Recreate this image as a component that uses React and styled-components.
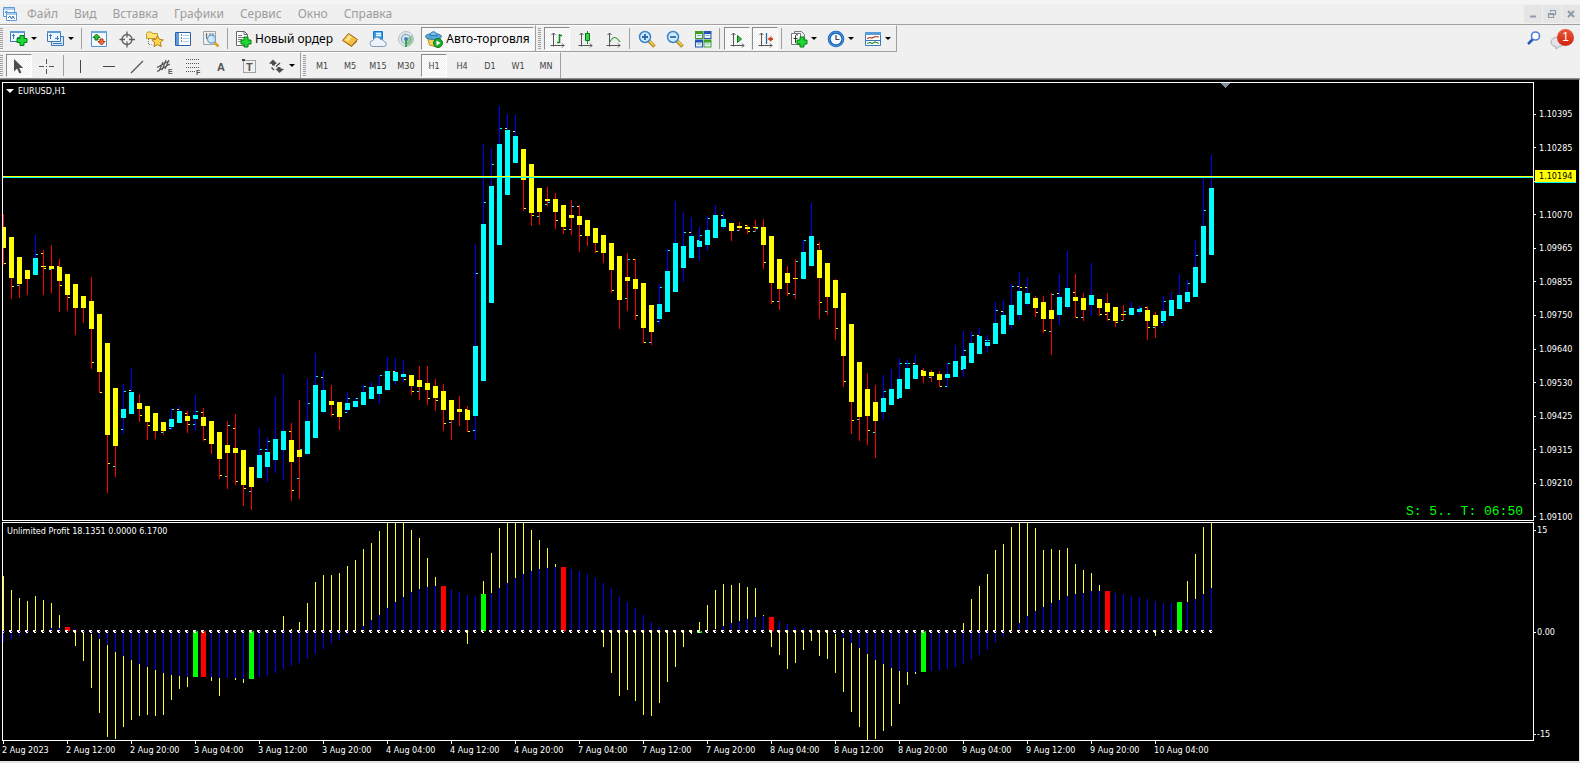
import React from "react";
import styled, { createGlobalStyle, css } from "styled-components";

const GlobalStyle = createGlobalStyle`
  * {
    box-sizing: border-box;
  }

  body {
    margin: 0;
    background: #f0f0f0;
    font-family: "Noto Sans", "Open Sans", sans-serif;
    font-size: 12px;
  }

  ul {
    margin: 0;
    padding: 0;
    list-style: none;
  }
`;

const chartFont = css`
  font-family: "DejaVu Sans Condensed", "DejaVu Sans", sans-serif;
  font-size: 9px;
  line-height: 12px;
`;

const Terminal = styled.div`
  min-height: 100vh;
  display: flex;
  flex-direction: column;
`;

const MenuBar = styled.header`
  display: flex;
  align-items: center;
  height: 25px;
  padding: 4px 0 0 3px;
  background: linear-gradient(#f4f4f4 4px, #f0f0f0 4px);
  border-bottom: 1px solid #a0a0a0;
`;

const MenuNav = styled.nav`
  display: flex;
  flex: 1;
`;

const MenuItem = styled.button`
  padding: 0 8px;
  border: 0;
  background: none;
  font: inherit;
  line-height: 18px;
  color: #9c9c9c;
`;

const WindowButtons = styled.div`
  display: flex;
  gap: 1px;
`;

const WindowButton = styled.button`
  display: flex;
  align-items: center;
  justify-content: center;
  width: 18px;
  height: 18px;
  padding: 0;
  border: 0;
  background: #e5e5e5;
`;

const ToolArea = styled.div`
  display: flex;
  justify-content: space-between;
  border-bottom: 1px solid #8c8c8c;
`;

const ToolRow = styled.div`
  display: flex;
  height: ${(props) => (props.$last ? "26px" : "27px")};
`;

const Toolbar = styled.div`
  display: flex;
  align-items: center;
  border-top: 1px solid #fff;
  border-right: 1px solid #a0a0a0;
  border-bottom: ${(props) => (props.$last ? "0" : "1px solid #a0a0a0")};
`;

const Grip = styled.span`
  width: ${(props) => (props.$edge ? "5px" : "7px")};
  height: 21px;
  border-right: 2px solid #f0f0f0;
  border-left: ${(props) => (props.$edge ? "0" : "2px")} solid #f0f0f0;
  background: repeating-linear-gradient(#a0a0a0 0 1px, #f0f0f0 1px 2px);
`;

const Separator = styled.span`
  width: 6px;
  height: 21px;
  border-left: 2px solid #f0f0f0;
  background: linear-gradient(90deg, #a0a0a0 1px, #f0f0f0 1px);
`;

const pressed = css`
  border-color: #8c8c8c #fff #fff #8c8c8c;
  background: repeating-conic-gradient(#fff 0 25%, #f0f0f0 0 50%) 0 0 / 2px 2px;
`;

const ToolButton = styled.button`
  display: flex;
  align-items: center;
  justify-content: center;
  gap: 3px;
  width: ${(props) => props.$width || 26}px;
  height: 23px;
  margin: 0 1px;
  padding: 0;
  border: 1px solid transparent;
  background: none;
  font: inherit;
  color: #000;
  white-space: nowrap;
  ${(props) => props.$pressed && pressed}
`;

const PeriodButton = styled(ToolButton)`
  font-family: "DejaVu Sans Condensed", "DejaVu Sans", sans-serif;
  font-size: 9px;
  color: #444;
`;

const DropArrow = styled.span`
  border: 3px solid transparent;
  border-top-color: #000;
  border-bottom: 0;
`;

const SideTools = styled.div`
  display: flex;
  align-items: flex-start;
  gap: 8px;
  padding: 4px 6px 0 0;
`;

const AlertButton = styled.button`
  position: relative;
  width: 24px;
  height: 22px;
  padding: 0;
  border: 0;
  background: none;
`;

const AlertCount = styled.span`
  position: absolute;
  top: 0;
  right: 0;
  width: 17px;
  height: 17px;
  border-radius: 50%;
  background: linear-gradient(#ea5a3c, #d3200c);
  color: #fff;
  font-size: 12px;
  line-height: 17px;
  text-align: center;
`;

const SearchButton = styled.button`
  display: flex;
  padding: 1px 0;
  border: 0;
  background: none;
`;

const ChartWindow = styled.main`
  flex: 1;
  display: grid;
  grid-template-columns: minmax(0, 1fr) 45px;
  grid-template-rows: auto auto 1fr;
  row-gap: 1px;
  padding: 2px 0 0 2px;
  border-top: 1px solid #555;
  border-right: 1px solid #e3e3e3;
  border-bottom: 2px solid #e3e3e3;
  background: #000;
  color: #fff;
  ${chartFont}
`;

const Pane = styled.section`
  position: relative;
  border: 1px solid #fff;

  svg {
    display: block;
    width: 100%;
  }
`;

const PaneTitle = styled.h2`
  position: absolute;
  top: 2px;
  left: ${(props) => props.$left || 3}px;
  display: flex;
  align-items: center;
  gap: 4px;
  margin: 0;
  font: inherit;
`;

const TitleArrow = styled.span`
  border: 4px solid transparent;
  border-top-color: #fff;
  border-bottom: 0;
`;

const Countdown = styled.p`
  position: absolute;
  right: 10px;
  bottom: 1px;
  margin: 0;
  font-family: "Liberation Mono", monospace;
  font-size: 13px;
  line-height: 14px;
  color: #00ff00;
  white-space: pre;
`;

const PriceScale = styled.ul`
  position: relative;
  display: flex;
  flex-direction: column;
  justify-content: space-between;
  padding: 26px 0 0;
  margin-bottom: -2px;
`;

const ScaleMark = styled.li`
  display: flex;
  align-items: center;
  gap: ${(props) => (props.$near ? "1px" : "3px")};
  min-height: 12px;

  &::before {
    content: "";
    width: 2px;
    height: 1px;
    background: #fff;
  }
`;

const PriceTag = styled.span`
  position: absolute;
  top: 88px;
  left: 1px;
  width: 41px;
  padding-left: 4px;
  border-bottom: 1px solid #00ffff;
  background: #ffff00;
  color: #000;
`;

const LevelScale = styled.ul`
  display: flex;
  flex-direction: column;
  justify-content: space-between;
  padding: 2px 0 1px;
`;

const TimeScale = styled.ul`
  display: flex;
  margin: -1px 0 0;
`;

const TimeMark = styled.li`
  flex: 0 0 64px;
  white-space: nowrap;

  &::before {
    content: "";
    display: block;
    width: 1px;
    height: 3px;
    margin: 0 0 0 1px;
    background: #fff;
  }
`;

const STEP = 8;
const YELLOW = "#ffff00";
const CYAN = "#00ffff";

// up, high, low, body top, body bottom, left tick, right tick
// a negative tick is drawn in yellow, a positive one in cyan
const candles = [
  [0, 214, 265, 227, 248, 0, -263],
  [0, 237, 299, 237, 278, 0, -286],
  [0, 257, 298, 257, 284, 285, 0],
  [0, 270, 295, 270, 279, 0, 0],
  [1, 235, 275, 258, 275, 0, 254],
  [0, 250, 295, 266, 267, -253, -268],
  [0, 245, 293, 266, 269, 269, 0],
  [0, 259, 312, 267, 281, -266, -285],
  [0, 274, 311, 274, 295, 0, -297],
  [0, 284, 335, 284, 308, 0, 0],
  [0, 296, 323, 296, 308, 0, 0],
  [0, 277, 369, 301, 329, 0, -362],
  [0, 314, 393, 314, 372, 0, -392],
  [0, 343, 493, 343, 435, 0, -463],
  [0, 388, 477, 388, 446, 466, 0],
  [1, 384, 434, 409, 418, 429, 391],
  [1, 368, 414, 392, 414, -390, 0],
  [0, 394, 422, 403, 409, 0, -415],
  [0, 406, 440, 406, 422, 0, -425],
  [0, 413, 439, 413, 431, 0, 0],
  [0, 422, 435, 422, 431, 432, 0],
  [1, 409, 430, 419, 427, 428, 409],
  [1, 406, 423, 411, 423, -409, 0],
  [0, 411, 433, 416, 421, -413, -424],
  [1, 395, 431, 415, 419, 424, 411],
  [0, 408, 441, 417, 426, -412, -439],
  [0, 421, 454, 421, 444, 0, 0],
  [0, 432, 479, 432, 459, 0, -475],
  [0, 421, 489, 445, 453, 476, 425],
  [0, 414, 485, 448, 453, -428, -481],
  [0, 450, 506, 450, 485, 0, -488],
  [0, 467, 510, 467, 487, 491, 0],
  [1, 428, 478, 455, 478, 0, 449],
  [1, 437, 482, 452, 467, 449, 441],
  [1, 396, 473, 439, 460, 0, 0],
  [1, 374, 480, 431, 450, 0, 0],
  [0, 423, 501, 440, 462, -431, -490],
  [0, 400, 499, 450, 457, 478, 449],
  [1, 379, 455, 421, 454, 0, 403],
  [1, 353, 438, 385, 438, 0, 376],
  [1, 371, 413, 390, 412, -377, 0],
  [0, 385, 417, 401, 405, 0, -414],
  [0, 402, 430, 402, 417, 0, 0],
  [1, 392, 413, 403, 410, 412, 398],
  [1, 398, 408, 401, 407, 0, 398],
  [1, 385, 405, 392, 405, 0, 386],
  [1, 382, 399, 387, 399, 0, 0],
  [1, 375, 404, 386, 394, 0, 375],
  [1, 357, 390, 371, 390, 0, 0],
  [1, 358, 385, 372, 381, -371, 0],
  [1, 360, 382, 374, 377, 0, -379],
  [0, 375, 395, 375, 386, 0, -391],
  [0, 366, 400, 380, 387, 391, 0],
  [0, 366, 405, 383, 390, 0, -398],
  [0, 379, 411, 386, 398, 0, -400],
  [0, 384, 431, 391, 410, 0, -423],
  [0, 400, 440, 400, 420, 422, 0],
  [0, 396, 426, 409, 412, 0, 0],
  [0, 406, 432, 410, 420, -409, -431],
  [1, 244, 440, 346, 416, 430, 273],
  [1, 144, 381, 224, 381, 0, 202],
  [1, 148, 303, 186, 303, 0, 164],
  [1, 106, 245, 144, 245, 0, 128],
  [1, 114, 195, 130, 195, -128, 0],
  [1, 115, 163, 136, 163, -131, 0],
  [0, 149, 211, 149, 180, 0, -208],
  [0, 164, 226, 164, 213, 0, -215],
  [0, 188, 225, 188, 212, 216, 0],
  [0, 187, 206, 199, 201, 204, 202],
  [0, 193, 229, 199, 212, 0, -220],
  [0, 205, 234, 205, 227, 0, -229],
  [0, 200, 235, 215, 218, 229, 206],
  [0, 205, 252, 216, 225, -206, -235],
  [0, 220, 246, 220, 236, 0, 0],
  [0, 228, 253, 228, 243, 0, -251],
  [0, 235, 263, 235, 253, 0, 0],
  [0, 243, 293, 243, 270, 0, -290],
  [0, 256, 329, 256, 300, 0, 0],
  [0, 253, 311, 277, 281, 298, 259],
  [0, 259, 320, 279, 289, -259, -315],
  [0, 283, 343, 283, 328, 0, -342],
  [0, 305, 345, 305, 332, 342, 0],
  [1, 284, 325, 304, 319, 321, 287],
  [1, 249, 312, 271, 312, 0, 250],
  [1, 201, 292, 243, 292, 0, 0],
  [1, 212, 282, 246, 268, 0, 232],
  [1, 217, 258, 236, 258, -232, 0],
  [1, 227, 261, 241, 247, 240, 235],
  [1, 216, 251, 230, 245, 0, 218],
  [1, 205, 238, 215, 238, 0, 0],
  [1, 211, 229, 219, 227, -215, 0],
  [0, 223, 241, 223, 231, 0, 0],
  [0, 222, 231, 226, 228, 230, 0],
  [0, 225, 234, 227, 229, -225, -231],
  [0, 220, 232, 227, 228, 231, 228],
  [0, 219, 269, 227, 245, 0, -262],
  [0, 236, 304, 236, 283, 0, -301],
  [0, 259, 310, 259, 289, 301, 0],
  [0, 266, 296, 273, 283, 0, -293],
  [0, 259, 299, 278, 279, 294, 261],
  [1, 240, 279, 252, 279, 0, 240],
  [1, 203, 266, 236, 266, 0, 0],
  [0, 242, 319, 250, 278, -244, -302],
  [0, 263, 315, 263, 297, 311, 0],
  [0, 279, 340, 280, 308, 0, -328],
  [0, 293, 387, 293, 356, 0, -381],
  [0, 324, 434, 324, 402, 0, -420],
  [0, 362, 441, 362, 417, 419, 0],
  [0, 373, 445, 389, 416, 0, -430],
  [0, 385, 458, 402, 421, 432, 0],
  [1, 375, 420, 398, 412, 0, 391],
  [1, 369, 405, 389, 405, 0, 0],
  [1, 358, 399, 379, 398, 398, 363],
  [1, 360, 389, 368, 389, 363, 363],
  [1, 355, 379, 365, 379, -363, 0],
  [0, 368, 383, 371, 376, -370, 0],
  [0, 370, 382, 372, 376, 377, 0],
  [0, 371, 387, 374, 380, 0, -386],
  [1, 363, 387, 374, 378, 386, 363],
  [1, 345, 377, 361, 377, 0, 0],
  [1, 331, 377, 356, 369, 369, 350],
  [1, 331, 363, 343, 363, 0, 335],
  [1, 328, 354, 336, 354, -335, 0],
  [1, 335, 352, 342, 346, 340, 340],
  [1, 302, 344, 323, 344, 0, 310],
  [1, 300, 334, 315, 334, -311, 0],
  [1, 284, 329, 305, 325, 0, 286],
  [1, 272, 319, 291, 315, -286, -287],
  [1, 277, 306, 293, 304, -287, 0],
  [0, 296, 317, 298, 308, 0, -312],
  [0, 296, 333, 302, 319, 0, -330],
  [0, 293, 355, 310, 319, 331, 294],
  [1, 274, 325, 297, 315, -293, 0],
  [1, 251, 309, 288, 307, 0, 0],
  [0, 274, 318, 297, 301, -292, -317],
  [0, 293, 321, 298, 310, 317, 0],
  [1, 263, 316, 295, 305, 0, 0],
  [0, 299, 316, 299, 308, 0, -314],
  [0, 293, 321, 303, 312, -314, -319],
  [0, 307, 327, 307, 321, 0, -322],
  [0, 305, 321, 314, 315, 320, 311],
  [1, 302, 315, 308, 315, 0, 0],
  [1, 306, 315, 309, 312, 0, 308],
  [0, 306, 340, 310, 321, -307, -327],
  [0, 312, 338, 315, 326, 327, 0],
  [1, 296, 326, 311, 321, 322, 301],
  [1, 292, 316, 300, 316, 0, 0],
  [1, 274, 309, 295, 309, 0, 0],
  [1, 280, 304, 292, 302, 0, 283],
  [1, 240, 297, 267, 297, 0, 255],
  [1, 178, 283, 226, 283, 0, 210],
  [1, 155, 255, 188, 255, 0, 0],
];

// yellow end, blue end, signal bar colour
const ZERO = 631;
const histogram = [
  [576, 642], [590, 639], [598, 636], [601, 634], [596, 0], [600, 630],
  [603, 628], [615, 628], [0, 627, "r"], [646, 629], [661, 632], [688, 634],
  [713, 639], [737, 645], [739, 652], [727, 656], [720, 660], [716, 664],
  [715, 667], [716, 670], [715, 673], [700, 675], [689, 676], [687, 677],
  [0, 677, "g"], [0, 677, "r"], [681, 677], [696, 678], [0, 678], [680, 678],
  [683, 679], [0, 679, "g"], [0, 677], [0, 676], [0, 673], [616, 669],
  [629, 666], [622, 663], [603, 659], [582, 654], [575, 649], [575, 644],
  [573, 640], [566, 635], [560, 0], [549, 626], [543, 620], [531, 615],
  [523, 608], [523, 602], [523, 597], [530, 592], [538, 589], [558, 587],
  [577, 586], [0, 586, "r"], [0, 589], [0, 592], [644, 595], [0, 596],
  [581, 594, "g"], [553, 593], [528, 588], [523, 583], [523, 578], [523, 574],
  [530, 571], [540, 569], [548, 568], [564, 567], [0, 567, "r"], [0, 569],
  [0, 571], [0, 574], [0, 578], [647, 583], [673, 588], [696, 596],
  [690, 602], [701, 608], [715, 615], [716, 622], [703, 627], [682, 630],
  [667, 0], [647, 0], [634, 0], [622, 633, "g"], [605, 0], [590, 629],
  [584, 626], [585, 623], [583, 621], [587, 619], [588, 617], [615, 616],
  [647, 617, "r"], [655, 621], [669, 624], [663, 627], [650, 628], [641, 629],
  [656, 0], [659, 0], [673, 634], [692, 638], [712, 643], [727, 648],
  [740, 654], [739, 660], [731, 664], [726, 668], [704, 671], [685, 672],
  [674, 672], [0, 672, "g"], [0, 671], [0, 670], [0, 669], [0, 667],
  [623, 664], [599, 660], [586, 655], [574, 650], [550, 643], [544, 637],
  [527, 0], [523, 623], [523, 616], [528, 611], [550, 607], [549, 603],
  [550, 600], [548, 596], [564, 594], [570, 593], [573, 591], [585, 591],
  [0, 591, "r"], [0, 593], [0, 594], [0, 596], [0, 597], [0, 599],
  [636, 601], [0, 603], [0, 603], [0, 602, "g"], [581, 602], [554, 599],
  [527, 594], [523, 588],
];

// the third mark stays blank: the current price tag lies over it
const prices = [
  "1.10395", "1.10285", "", "1.10070", "1.09965", "1.09855", "1.09750",
  "1.09640", "1.09530", "1.09425", "1.09315", "1.09210", "1.09100",
];

const times = [
  "2 Aug 2023", "2 Aug 12:00", "2 Aug 20:00", "3 Aug 04:00", "3 Aug 12:00",
  "3 Aug 20:00", "4 Aug 04:00", "4 Aug 12:00", "4 Aug 20:00", "7 Aug 04:00",
  "7 Aug 12:00", "7 Aug 20:00", "8 Aug 04:00", "8 Aug 12:00", "8 Aug 20:00",
  "9 Aug 04:00", "9 Aug 12:00", "9 Aug 20:00", "10 Aug 04:00",
];

const menus = ["Файл", "Вид", "Вставка", "Графики", "Сервис", "Окно", "Справка"];
const periods = ["M1", "M5", "M15", "M30", "H1", "H4", "D1", "W1", "MN"];

const Tick = ({ x, y }) =>
  y ? <rect x={x} y={Math.abs(y)} width="2" height="1" fill={y < 0 ? YELLOW : CYAN} /> : null;

const Candle = ({ x, data }) => {
  const [up, high, low, top, bottom, left, right] = data;
  return (
    <g>
      <rect x={x} y={high} width="1" height={low - high} fill={up ? "#0000ff" : "#ff0000"} />
      <rect x={x - 2} y={top} width="5" height={bottom - top} fill={up ? CYAN : YELLOW} />
      <Tick x={x - 2} y={left} />
      <Tick x={x + 1} y={right} />
    </g>
  );
};

const PriceChart = () => (
  <svg height="437" shapeRendering="crispEdges" aria-hidden="true">
    <g transform="translate(0 -83)">
      {candles.map((data, i) => (
        <Candle key={i} x={i * STEP} data={data} />
      ))}
      <rect x="0" y="176" width="100%" height="1" fill={YELLOW} />
      <rect x="0" y="177" width="100%" height="1" fill={CYAN} />
      <path d="M1217 83h10l-5 5z" fill="#8090a0" />
    </g>
  </svg>
);

const Bar = ({ x, end, width = 1, fill }) =>
  end ? (
    <rect x={x} y={Math.min(end, ZERO)} width={width} height={Math.abs(end - ZERO)} fill={fill} />
  ) : null;

const IndicatorChart = () => (
  <svg height="217" shapeRendering="crispEdges" aria-hidden="true">
    <g transform="translate(0 -523)">
      {histogram.map(([yellow, blue, signal], i) => {
        const x = i * STEP;
        return (
          <g key={i}>
            <Bar x={x} end={yellow} fill="#ffff28" />
            {signal ? (
              <Bar x={x - 2} end={blue} width={5} fill={signal === "r" ? "#ff0000" : "#00ff00"} />
            ) : (
              <Bar x={x} end={blue} fill="#0000ff" />
            )}
            <path d={`M${x - 2} 630h3v1h-1v1h1v1h-2v-1h-1z`} fill="#fff" />
            <rect x={x + 1} y="631" width="1" height="1" fill="#a03020" />
          </g>
        );
      })}
    </g>
  </svg>
);

const Icon = ({ size = 18, shift = 0, children }) => (
  <svg
    width={size}
    height={size}
    viewBox={`${-shift} ${-shift} ${size} ${size}`}
    fill="none"
    aria-hidden="true"
  >
    {children}
  </svg>
);

const Plus = ({ x, y }) => (
  <path
    transform={`translate(${x} ${y})`}
    d="M3.500.5h4v3h3v4h-3v3h-4v-3h-3v-4h3z"
    fill="#1ed838"
    stroke="#067d10"
  />
);

const AppIcon = () => (
  <Icon size={16}>
    <path d="M.5 1.500h11v9H.5z" fill="#fff" stroke="#5c9ad6" />
    <path d="M1 2h10v2H1z" fill="#a8cdf2" />
    <path d="M2 7l1.500-2L5 7" stroke="#2f6fc0" />
    <path d="M3.500 6.500h10v8h-10z" fill="#fff" stroke="#5c9ad6" />
    <path d="M4 7h9v2H4z" fill="#a8cdf2" />
    <path d="M5 12l2-2 1.500 3 1.500-3 1.500 3" stroke="#2f6fc0" />
  </Icon>
);

const NewChartIcon = () => (
  <Icon>
    <path d="M.5 1.500h14v10H.5z" fill="#eef6ff" stroke="#3b78b5" />
    <path d="M0 1h15v2H0z" fill="#5b9bd8" />
    <path d="M3.500 4v5M2 5.500h3M7 7.500h3" stroke="#3b78b5" />
    <Plus x={6.5} y={5} />
  </Icon>
);

const ProfilesIcon = () => (
  <Icon>
    <path d="M4.500 6.500h12v9h-12z" fill="#dcebfa" stroke="#3b78b5" />
    <path d="M.5 1.500h13v10H.5z" fill="#eef6ff" stroke="#3b78b5" />
    <path d="M0 1h14v2H0z" fill="#5b9bd8" />
    <path d="M3.500 4v5M2 5.500h3M10.500 6v4M8 8.500h4M6 13.500h9" stroke="#3b78b5" />
  </Icon>
);

const MarketWatchIcon = () => (
  <Icon>
    <path d="M1.500 1.500h15v15h-15z" fill="#f4faff" stroke="#4f94cf" />
    <path d="M1 1h16v2H1z" fill="#6aa8dd" />
    <path d="M3 7.500L6.500 4 10 7.500H8V10H5V7.500z" fill="#2fbd3b" stroke="#08750f" />
    <path d="M8 11.500l3.500 3.500 3.500-3.500h-2V9h-3v2.500z" fill="#f07040" stroke="#b52a0a" />
  </Icon>
);

const TargetIcon = () => (
  <Icon>
    <circle cx="9" cy="9.500" r="5" stroke="#606060" strokeWidth="1.300" />
    <path d="M9 1.500v6M9 11.500v6M1.500 9.500H7M11 9.500h6" stroke="#606060" strokeWidth="1.300" />
  </Icon>
);

const FavoritesIcon = () => (
  <Icon>
    <path d="M.5 3.500l1-1.500h4l1 1.500h5v5H.5z" fill="#ffe27a" stroke="#c59b28" />
    <path d="M2.500 9v5.500h3" stroke="#777" strokeDasharray="1 1" />
    <path
      d="M11.500 5.800l1.800 3.500 4 .6-2.900 2.700.8 4-3.700-1.900-3.600 1.900.7-4-2.800-2.700 3.900-.6z"
      fill="#ffd24d"
      stroke="#b57d16"
    />
  </Icon>
);

const NavigatorIcon = () => (
  <Icon>
    <path d="M1.500 2.500h15v13h-15z" fill="#fff" stroke="#2b62a5" />
    <path d="M2 3h3v12H2z" fill="#5f9be0" />
    <path d="M7 5h1M7 8h1M7 11h1" stroke="#111" />
    <path d="M9 5.500h6M9 8.500h6M9 11.500h6" stroke="#a8cdf0" />
  </Icon>
);

const TesterIcon = () => (
  <Icon>
    <path d="M1.500 1.500h12v13h-12z" fill="#eee" stroke="#9aa4ad" />
    <path d="M4.500 3v6M3.500 5h2M8 3v3M11 3v7" stroke="#777" />
    <path d="M12 12l4.500 4.500" stroke="#d7a52a" strokeWidth="2.500" />
    <circle cx="9.500" cy="9" r="4" fill="#cbe6fa" fillOpacity=".85" stroke="#6ba1cd" strokeWidth="1.300" />
  </Icon>
);

const OrderIcon = () => (
  <Icon>
    <path d="M2.500 1.500h8l3 3v11h-11z" fill="#fff" stroke="#666" />
    <path d="M10 1.500v3h3.500" stroke="#666" />
    <path d="M4 5.500h4M4 7.500h7M4 9.500h4M4 11.500h3" stroke="#777" />
    <Plus x={6.5} y={6.5} />
  </Icon>
);

const GoldIcon = () => (
  <Icon>
    <path d="M1.500 10.500l6-7 9 6-6 6.500z" fill="#f4bf42" stroke="#9b6410" />
    <path d="M2 11l8.500 5L16 10v1.800L10.500 17z" fill="#a96f15" />
    <path d="M4 10l4-5 3 2-4 4.700z" fill="#ffe58f" />
  </Icon>
);

const CloudIcon = () => (
  <Icon>
    <path d="M4.500 1.500h9v9h-9z" fill="#2f9df0" stroke="#1779c9" />
    <path d="M7 3.500h5M7 5.500h5" stroke="#fff" strokeWidth="1.400" />
    <path
      d="M4 16.500a3 3 0 010-6 4 4 0 017.500-1 3 3 0 013.500 2 2.500 2.500 0 01-.5 5z"
      fill="#eef3fb"
      stroke="#8398b8"
    />
  </Icon>
);

const SignalIcon = () => (
  <Icon>
    <circle cx="9" cy="9" r="7.500" fill="#dfe7ea" stroke="#b4c4cc" />
    <path d="M9 9v7.500a7.500 7.500 0 006-11.500z" fill="#9ccf9e" />
    <circle cx="9" cy="9" r="4.500" stroke="#7a9fc0" strokeWidth="1.200" />
    <circle cx="9" cy="9" r="2" fill="#3f82bd" />
    <path d="M9 10v7" stroke="#249a35" strokeWidth="1.600" />
  </Icon>
);

const AutoTradeIcon = () => (
  <Icon>
    <path d="M2.500 8l2 7 5 1.500 4-3 1.500-6z" fill="#f5cf58" stroke="#c28e20" />
    <ellipse cx="8.500" cy="6.500" rx="8" ry="3" fill="#55a5d8" stroke="#2c79ad" />
    <path d="M5 5.500c0-5 7-5 7 0z" fill="#78c1ec" stroke="#2c79ad" />
    <circle cx="13" cy="13" r="4.500" fill="#1cab2f" stroke="#0a7717" />
    <path d="M11.500 10.500l4 2.500-4 2.500z" fill="#fff" />
  </Icon>
);

const Axes = () => (
  <path d="M4.500 2v13.500M1.500 14.500H15M2.500 4l2-2 2 2M13 12.500l2 2-2 2" stroke="#555" />
);

const BarsIcon = () => (
  <Icon shift={1}>
    <Axes />
    <path d="M10.500 3v9M8 11.500h2.500M10.500 4.500h2.500" stroke="#148a20" strokeWidth="1.600" />
  </Icon>
);

const CandlesIcon = () => (
  <Icon shift={1}>
    <Axes />
    <path d="M10.500 0v13" stroke="#148a20" />
    <path d="M8.500 2.500h4v7h-4z" fill="#35d649" stroke="#08750f" />
  </Icon>
);

const LineIcon = () => (
  <Icon shift={1}>
    <Axes />
    <path d="M5 11c3-6 6-6 10 0" stroke="#2e9e3a" strokeWidth="1.200" />
  </Icon>
);

const ZoomIcon = ({ plus }) => (
  <Icon>
    <path d="M11 11l5.500 5.500" stroke="#b98a1d" strokeWidth="3.500" />
    <path d="M11.500 11l4.500 4.500" stroke="#f5d563" strokeWidth="1.500" />
    <circle cx="7" cy="7" r="5.500" fill="#cfeafc" stroke="#3b86c8" strokeWidth="1.500" />
    <path d={plus ? "M4 7h6M7 4v6" : "M4 7h6"} stroke="#2c6cad" strokeWidth="1.800" />
  </Icon>
);

const TileIcon = () => (
  <Icon>
    <path d="M1 1h8v8H1zM9.500 9.500h8v8h-8z" fill="#3ca01c" />
    <path d="M9.500 1h8v8h-8zM1 9.500h8v8H1z" fill="#2452b5" />
    <path d="M2 4h6v4H2zM10.500 4h6v4h-6zM2 12.500h6v4H2zM10.500 12.500h6v4h-6z" fill="#e9f1fb" />
    <path d="M3 5.500h4M11.500 5.500h4M3 14h4M11.500 14h4" stroke="#8ab0c0" />
  </Icon>
);

const ScrollIcon = () => (
  <Icon shift={1}>
    <Axes />
    <path d="M8.500 4.500l4 3.500-4 3.500z" fill="#35c548" stroke="#08750f" />
  </Icon>
);

const ShiftIcon = () => (
  <Icon shift={1}>
    <Axes />
    <path d="M9.500 2v11" stroke="#27659d" strokeWidth="1.300" />
    <path d="M10.500 8l4-3v2H16v2h-1.500v2z" fill="#d24518" />
  </Icon>
);

const IndicatorsIcon = () => (
  <Icon>
    <path d="M4.500 3.500v-2h7l3 3v9h-3" fill="#eee" stroke="#777" />
    <path d="M1.500 3.500h9v11h-9z" fill="#fff" stroke="#777" />
    <path d="M8 5c-2-1-2.500 0-2.500 2v6M3.500 8.500h4" stroke="#333" />
    <Plus x={6.5} y={6.5} />
  </Icon>
);

const ClockIcon = () => (
  <Icon>
    <circle cx="9" cy="9" r="6.800" fill="#f5f8fc" stroke="#1660b5" strokeWidth="3" />
    <circle cx="9" cy="9" r="7" stroke="#52a1ea" />
    <path d="M9 5v4.500h3.500" stroke="#444" strokeWidth="1.200" />
  </Icon>
);

const TemplateIcon = () => (
  <Icon>
    <path d="M1.500 2.500h15v13h-15z" fill="#fff" stroke="#3b78b5" />
    <path d="M1 2h16v3H1z" fill="#5b9bd8" />
    <path d="M3 8.500l3-1 2 .5 3-1.500 4 .5" stroke="#b5341a" strokeWidth="1.200" />
    <path d="M2 10.500h14" stroke="#3b78b5" />
    <path d="M3 13.500l3-1 2 1 3-1.500 4 1.500" stroke="#2e8d3c" strokeWidth="1.200" />
  </Icon>
);

const CursorIcon = () => (
  <Icon>
    <path d="M4 2v12.500l3-3 2.500 5 2-1-2.300-4.500h4z" fill="#4c4c4c" />
  </Icon>
);

const CrossIcon = () => (
  <Icon>
    <path d="M8.500 2v5M8.500 12v5M1 9.500h5M11 9.500h5" stroke="#555" />
    <path d="M8 9h1v1H8z" fill="#555" />
  </Icon>
);

const VLineIcon = () => (
  <Icon>
    <path d="M8.500 3v13" stroke="#444" />
  </Icon>
);

const HLineIcon = () => (
  <Icon>
    <path d="M3 9.500h12" stroke="#444" />
  </Icon>
);

const TrendIcon = () => (
  <Icon>
    <path d="M3 16L15 4" stroke="#555" strokeWidth="1.200" />
  </Icon>
);

const IconText = styled.text`
  font-family: "Liberation Sans", sans-serif;
  font-size: ${(props) => props.$size || 7}px;
  font-weight: 700;
  fill: #555;
`;

const ChannelIcon = () => (
  <Icon>
    <path d="M1 10.500L13 4M1 14.500L14 7M3 14L7 5M6 13l4-10M9 12l4-9" stroke="#555" strokeWidth="1.200" />
    <IconText x="12" y="17">E</IconText>
  </Icon>
);

const FiboIcon = () => (
  <Icon>
    <path d="M2 2.500h14M2 6.500h14M2 10.500h14M2 14.500h9" stroke="#555" strokeDasharray="1 1" />
    <IconText x="12" y="18">F</IconText>
  </Icon>
);

const LetterIcon = () => (
  <Icon>
    <IconText x="5" y="14" $size={11}>A</IconText>
  </Icon>
);

const LabelIcon = () => (
  <Icon>
    <path d="M3.500 3.500h12v12h-12z" stroke="#555" strokeDasharray="1 1" />
    <path d="M2 2h3v2H2z" fill="#444" />
    <IconText x="6" y="14" $size={11}>T</IconText>
  </Icon>
);

const ArrowsIcon = () => (
  <Icon>
    <path d="M5 2.500L9 6.500 7 7v1.500H4V7L1 6.500zM9.500 11.500V10h3v1.500l3.500.5-4.500 4L7.500 12z" fill="#4c4c4c" />
    <path d="M3.500 10.500L6 13M8 9.500L12 6" stroke="#4c4c4c" strokeWidth="1.400" />
  </Icon>
);

const SearchIcon = () => (
  <Icon size={16}>
    <path d="M7 9l-5 5" stroke="#2358b8" strokeWidth="2.500" />
    <circle cx="9.500" cy="6" r="4" fill="#fff" stroke="#4d80dc" strokeWidth="1.600" />
  </Icon>
);

const BubbleIcon = () => (
  <svg width="24" height="22" viewBox="0 0 24 22" aria-hidden="true">
    <path d="M9 8c-10 0-10 9-3 9.500L6 20l3.500-2.500C17 17 16 8 9 8z" fill="#e3e3e8" stroke="#a9a9ae" />
  </svg>
);

const DropButton = ({ label, children, ...rest }) => (
  <ToolButton $width={35} aria-label={label} {...rest}>
    {children}
    <DropArrow />
  </ToolButton>
);

const App = () => (
  <>
    <GlobalStyle />
    <Terminal>
      <MenuBar>
        <AppIcon />
        <MenuNav>
          {menus.map((name) => (
            <MenuItem key={name}>{name}</MenuItem>
          ))}
        </MenuNav>
        <WindowButtons>
          <WindowButton aria-label="Minimize">
            <Icon size={10}>
              <path d="M2 7.500h6" stroke="#8d9bab" strokeWidth="2" />
            </Icon>
          </WindowButton>
          <WindowButton aria-label="Restore">
            <Icon size={10}>
              <path d="M3.500 3V1.500h5v4H7M1.500 4.500h5v4h-5zM1.500 5.500h5" stroke="#8d9bab" strokeWidth="1.200" />
            </Icon>
          </WindowButton>
          <WindowButton aria-label="Close">
            <Icon size={10}>
              <path d="M2 2l6 6M8 2L2 8" stroke="#8d9bab" strokeWidth="2" />
            </Icon>
          </WindowButton>
        </WindowButtons>
      </MenuBar>

      <ToolArea>
        <div>
          <ToolRow>
            <Toolbar>
              <Grip $edge />
              <DropButton label="New chart"><NewChartIcon /></DropButton>
              <DropButton label="Profiles"><ProfilesIcon /></DropButton>
              <Separator />
              <ToolButton aria-label="Market watch"><MarketWatchIcon /></ToolButton>
              <ToolButton aria-label="Data window"><TargetIcon /></ToolButton>
              <ToolButton aria-label="Navigator"><FavoritesIcon /></ToolButton>
              <ToolButton aria-label="Terminal"><NavigatorIcon /></ToolButton>
              <ToolButton aria-label="Strategy tester"><TesterIcon /></ToolButton>
              <Separator />
              <ToolButton $width={103}>
                <OrderIcon />
                Новый ордер
              </ToolButton>
              <ToolButton aria-label="MetaEditor"><GoldIcon /></ToolButton>
              <ToolButton aria-label="Cloud"><CloudIcon /></ToolButton>
              <ToolButton aria-label="Signals"><SignalIcon /></ToolButton>
              <ToolButton $width={113} $pressed>
                <AutoTradeIcon />
                Авто-торговля
              </ToolButton>
            </Toolbar>
            <Toolbar>
              <Grip />
              <ToolButton $pressed aria-label="Bars"><BarsIcon /></ToolButton>
              <ToolButton aria-label="Candles"><CandlesIcon /></ToolButton>
              <ToolButton aria-label="Line"><LineIcon /></ToolButton>
              <Separator />
              <ToolButton aria-label="Zoom in"><ZoomIcon plus /></ToolButton>
              <ToolButton aria-label="Zoom out"><ZoomIcon /></ToolButton>
              <ToolButton aria-label="Tile windows"><TileIcon /></ToolButton>
              <Separator />
              <ToolButton $pressed aria-label="Auto scroll"><ScrollIcon /></ToolButton>
              <ToolButton $pressed aria-label="Chart shift"><ShiftIcon /></ToolButton>
              <Separator />
              <DropButton label="Indicators"><IndicatorsIcon /></DropButton>
              <DropButton label="Periods"><ClockIcon /></DropButton>
              <DropButton label="Templates"><TemplateIcon /></DropButton>
            </Toolbar>
          </ToolRow>
          <ToolRow $last>
            <Toolbar $last>
              <Grip $edge />
              <ToolButton $pressed aria-label="Cursor"><CursorIcon /></ToolButton>
              <ToolButton aria-label="Crosshair"><CrossIcon /></ToolButton>
              <Separator />
              <ToolButton aria-label="Vertical line"><VLineIcon /></ToolButton>
              <ToolButton aria-label="Horizontal line"><HLineIcon /></ToolButton>
              <ToolButton aria-label="Trend line"><TrendIcon /></ToolButton>
              <ToolButton aria-label="Channel"><ChannelIcon /></ToolButton>
              <ToolButton aria-label="Fibonacci"><FiboIcon /></ToolButton>
              <ToolButton aria-label="Text"><LetterIcon /></ToolButton>
              <ToolButton aria-label="Text label"><LabelIcon /></ToolButton>
              <DropButton label="Arrows"><ArrowsIcon /></DropButton>
            </Toolbar>
            <Toolbar $last>
              <Grip />
              {periods.map((name) => (
                <PeriodButton key={name} $pressed={name === "H1"}>{name}</PeriodButton>
              ))}
            </Toolbar>
          </ToolRow>
        </div>
        <SideTools>
          <SearchButton aria-label="Search"><SearchIcon /></SearchButton>
          <AlertButton aria-label="Notifications">
            <BubbleIcon />
            <AlertCount>1</AlertCount>
          </AlertButton>
        </SideTools>
      </ToolArea>

      <ChartWindow>
        <Pane>
          <PriceChart />
          <PaneTitle>
            <TitleArrow />
            EURUSD,H1
          </PaneTitle>
          <Countdown>S: 5.. T: 06:50</Countdown>
        </Pane>
        <PriceScale>
          {prices.map((price, i) => (
            <ScaleMark key={i}>{price}</ScaleMark>
          ))}
          <PriceTag as="li">1.10194</PriceTag>
        </PriceScale>
        <Pane>
          <IndicatorChart />
          <PaneTitle $left={4}>Unlimited Profit 18.1351 0.0000 6.1700</PaneTitle>
        </Pane>
        <LevelScale>
          <ScaleMark $near>15</ScaleMark>
          <ScaleMark $near>0.00</ScaleMark>
          <ScaleMark $near>-15</ScaleMark>
        </LevelScale>
        <TimeScale>
          {times.map((time) => (
            <TimeMark key={time}>{time}</TimeMark>
          ))}
        </TimeScale>
      </ChartWindow>
    </Terminal>
  </>
);

export default App;
